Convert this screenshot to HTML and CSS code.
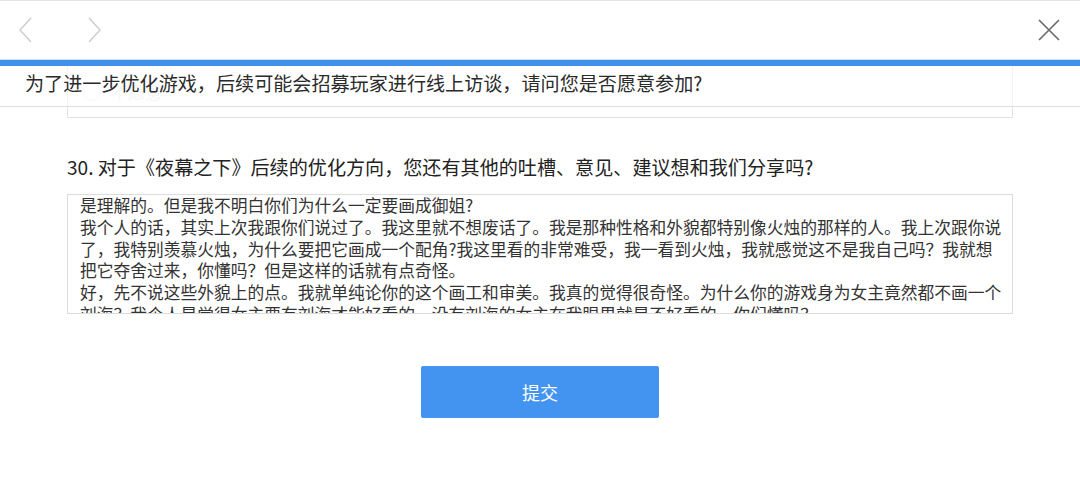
FILE: index.html
```html
<!DOCTYPE html>
<html lang="zh-CN">
<head>
<meta charset="utf-8">
<title>问卷</title>
<link rel="stylesheet" href="styles.css">
</head>
<body>
<header class="topbar">
  <div class="nav">
    <svg class="chev" width="16" height="28" viewBox="0 0 16 28"><path d="M13 2 L2 14 L13 26" fill="none" stroke="#cfcfcf" stroke-width="1.6"/></svg>
    <svg class="chev fwd" width="16" height="28" viewBox="0 0 16 28"><path d="M3 2 L14 14 L3 26" fill="none" stroke="#cfcfcf" stroke-width="1.6"/></svg>
  </div>
  <svg class="close" width="24" height="24" viewBox="0 0 24 24"><path d="M2 2 L22 22 M22 2 L2 22" fill="none" stroke="#6b6b6b" stroke-width="1.7"/></svg>
</header>
<div class="progress"></div>
<section class="prev">
  <div class="optbox">
    <span class="radio"></span><span class="optlabel">不愿意</span>
  </div>
  <div class="overlay">为了进一步优化游戏，后续可能会招募玩家进行线上访谈，请问您是否愿意参加?</div>
</section>
<main class="question">
  <h2 class="qtitle">30. 对于《夜幕之下》后续的优化方向，您还有其他的吐槽、意见、建议想和我们分享吗?</h2>
  <div class="answer">
    <div class="line">是理解的。但是我不明白你们为什么一定要画成御姐?</div>
    <div class="line">我个人的话，其实上次我跟你们说过了。我这里就不想废话了。我是那种性格和外貌都特别像火烛的那样的人。我上次跟你说</div>
    <div class="line">了，我特别羡慕火烛，为什么要把它画成一个配角?我这里看的非常难受，我一看到火烛，我就感觉这不是我自己吗？我就想</div>
    <div class="line">把它夺舍过来，你懂吗？但是这样的话就有点奇怪。</div>
    <div class="line">好，先不说这些外貌上的点。我就单纯论你的这个画工和审美。我真的觉得很奇怪。为什么你的游戏身为女主竟然都不画一个</div>
    <div class="line">刘海？我个人是觉得女主要有刘海才能好看的，没有刘海的女主在我眼里就是不好看的，你们懂吗？</div>
  </div>
  <div class="actions">
    <button class="submit" type="button">提交</button>
  </div>
</main>
</body>
</html>
```
FILE: styles.css
```css
html, body {
  margin: 0;
  padding: 0;
  background: #fff;
  font-family: "Noto Sans CJK SC", "Noto Sans", sans-serif;
  color: #333;
}
.topbar {
  height: 59px;
  box-sizing: border-box;
  border-top: 1px solid #e3e3e3;
  display: flex;
  align-items: center;
  justify-content: space-between;
  padding: 0 19px 0 18px;
}
.nav {
  display: flex;
  align-items: center;
  gap: 52px;
}
.chev { display: block; }
.close { display: block; }
.progress {
  height: 7px;
  background: #4390ea;
  border-top: 1px solid #cfe0f5;
  box-sizing: border-box;
}
.prev {
  position: relative;
  height: 52px;
}
.optbox {
  margin-left: 67px;
  width: 946px;
  height: 52px;
  box-sizing: border-box;
  border: 1px solid #e2e2e2;
  border-top: none;
  display: flex;
  align-items: center;
  padding-left: 15px;
  gap: 10px;
}
.radio {
  width: 16px;
  height: 16px;
  border: 1px solid #e8e8e8;
  border-radius: 50%;
}
.optlabel {
  font-size: 17px;
  color: #e6e6e6;
}
.overlay {
  position: absolute;
  left: 0;
  top: 0;
  right: 0;
  height: 41px;
  box-sizing: border-box;
  border-bottom: 1px solid #dedede;
  background: rgba(255, 255, 255, 0.6);
  padding-left: 25px;
  font-size: 19.1px;
  line-height: 34px;
  color: #2b2b2b;
  white-space: nowrap;
}
.question {
  padding: 0 0 0 67px;
}
.qtitle {
  margin: 36px 0 0;
  font-size: 19.1px;
  font-weight: normal;
  line-height: 26px;
  color: #222;
  white-space: nowrap;
}
.answer {
  margin-top: 14px;
  width: 946px;
  height: 120px;
  box-sizing: border-box;
  border: 1px solid #dcdcdc;
  overflow: hidden;
  padding: 0 0 0 12px;
  font-size: 16.75px;
  line-height: 21.8px;
  color: #333;
}
.line {
  white-space: nowrap;
}
.actions {
  width: 946px;
  display: flex;
  justify-content: center;
  margin-top: 52px;
}
.submit {
  width: 238px;
  height: 52px;
  border: none;
  border-radius: 2px;
  background: #4394f0;
  color: #fff;
  font-family: "Noto Sans CJK SC", sans-serif;
  font-size: 18px;
  cursor: pointer;
}
```
